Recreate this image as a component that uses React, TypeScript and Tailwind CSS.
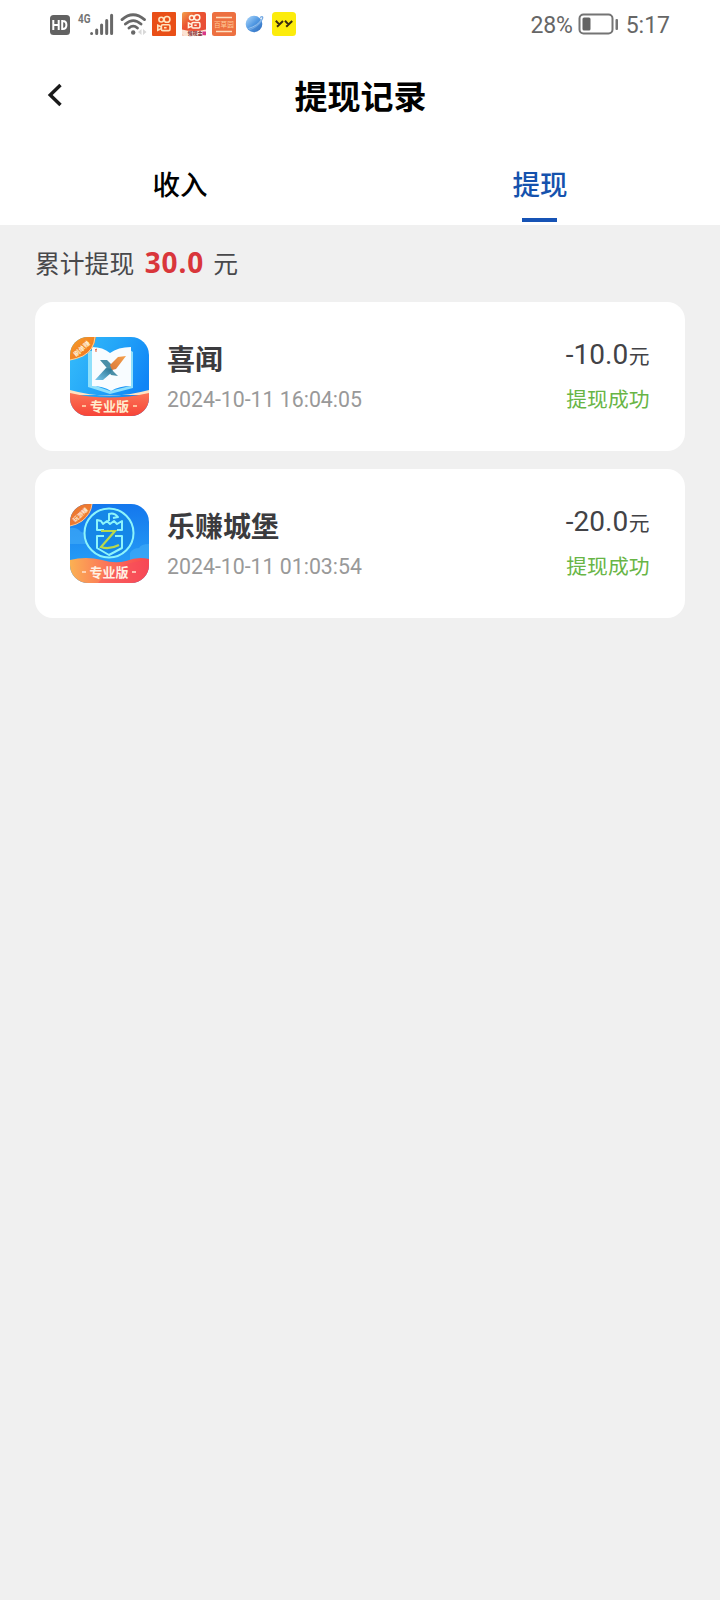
import type { ReactNode } from "react";

const CJK = "'Noto Sans CJK SC', sans-serif";

function CameraGlyph({ color }: { color: string }) {
  return (
    <g fill="none" stroke={color} strokeWidth="1.6">
      <circle cx="9.3" cy="7.6" r="2.4" />
      <circle cx="15" cy="7.4" r="2.9" />
      <rect x="9.4" y="12.8" width="8.6" height="5.8" rx="1.4" />
      <path d="M9.4 15 5.8 13.2v5L9.4 16.6" />
      <path d="M12 15.7h2.6" />
    </g>
  );
}

function StatusBar() {
  return (
    <div className="flex h-12 items-center justify-between pl-[50px] pr-[50px]">
      <div className="flex items-center">
        <svg width="20" height="20" viewBox="0 0 20 20" className="mt-[1px]">
          <rect width="20" height="20" rx="3.5" fill="#626262" />
          <path d="M3.3 5v10M8.7 5v10M3.3 10h5.4M12.2 5v10M11.3 6h1.5c4.8 0 4.8 8 0 8h-1.5" fill="none" stroke="#fff" strokeWidth="2" />
        </svg>
        <div className="ml-2 flex h-6 items-start">
          <svg width="13" height="16" viewBox="0 0 13 16" className="overflow-visible">
            <text x="0" y="11" fontFamily="Roboto, sans-serif" fontSize="13.5" fontWeight="700" fill="#747474" textLength="12.5" lengthAdjust="spacingAndGlyphs">4G</text>
          </svg>
          <svg width="25" height="24" viewBox="12 0 25 24" className="-ml-px -mr-px">
            <path d="M13.6 21.4v.2M18.7 18v3.6M23.6 13v8.6M28.7 8.6v13M33.6 3.2v18.4" stroke="#686868" strokeWidth="3" strokeLinecap="round" />
          </svg>
        </div>
        <svg width="27" height="24" viewBox="0 0 27 24" className="ml-[6px]">
          <g fill="none" stroke="#686868" strokeWidth="2.8" strokeLinecap="round">
            <path d="M2 7.6Q13 -2 24.5 7.6M5.4 12Q13.2 5.2 21 12M9 16Q13.2 12.3 17.4 16" />
          </g>
          <circle cx="13.2" cy="20.5" r="2.2" fill="#686868" />
          <path d="M21.5 17v6l-3.5-3zM23 17v6l3.500-3z" fill="#d8d8d8" />
        </svg>
        <svg width="24" height="24" viewBox="0 0 24 24" className="ml-[5px]">
          <rect width="24" height="24" rx="1" fill="#e94f17" />
          <CameraGlyph color="#ffe2bd" />
        </svg>
        <svg width="24" height="24" viewBox="0 0 24 24" className="ml-[6px] overflow-visible">
          <defs>
            <linearGradient id="quick" x1="0" y1="0" x2="1" y2="1">
              <stop offset="0" stopColor="#f2a14d" />
              <stop offset=".35" stopColor="#eb5430" />
              <stop offset="1" stopColor="#e64a3a" />
            </linearGradient>
          </defs>
          <rect width="24" height="24" rx="2" fill="url(#quick)" />
          <g transform="translate(1 -1.5) scale(.94)">
            <CameraGlyph color="#fff4e2" />
          </g>
          <path d="M0 17.5q12 3 24 0v4.500q0 2-2 2H2q-2 0-2-2z" fill="#fbe3d3" />
          <text x="5.5" y="23.2" fontFamily={CJK} fontSize="5" fontWeight="700" fill="#7b2330">领现金</text>
          <rect x="20.5" y="19.5" width="3.5" height="3.5" fill="#d9378a" />
        </svg>
        <svg width="24" height="24" viewBox="0 0 24 24" className="ml-[6px]">
          <rect width="24" height="24" rx="2.5" fill="#ed7040" />
          <path d="M4 5.5h16M4 19.5h16" stroke="#ffe0c0" strokeWidth="1.3" />
          <text x="2" y="14.8" fontFamily={CJK} fontSize="6.6" fill="#ffc997">百草园</text>
        </svg>
        <svg width="20" height="20" viewBox="0 0 20 20" className="ml-[8px]">
          <defs>
            <linearGradient id="planet" x1="0" y1="0" x2="1" y2="1">
              <stop offset="0" stopColor="#b4dcfc" />
              <stop offset=".5" stopColor="#4f97e2" />
              <stop offset="1" stopColor="#2d68b8" />
            </linearGradient>
          </defs>
          <circle cx="10" cy="10" r="8.3" fill="url(#planet)" />
          <path d="M16 3.5Q19.5 1.5 18.5 4.5 15.500 12 5 16" fill="none" stroke="#6fa6e2" strokeWidth="1.3" />
          <path d="M17.5 5.5Q14 11.500 4.500 14.500" fill="none" stroke="#b5d7f7" strokeWidth=".7" />
        </svg>
        <svg width="24" height="24" viewBox="0 0 24 24" className="ml-[8px]">
          <rect width="24" height="24" rx="3.5" fill="#fcec0c" />
          <path d="M3.8 8.8l3.4 3.6M11 9 5 14.800M13 8.800l3.400 3.600M20.200 9l-6 5.800" fill="none" stroke="#3a2d10" strokeWidth="2" />
        </svg>
      </div>
      <div className="flex items-center font-['Roboto',sans-serif] text-[23px] leading-none text-[#666]">
        <span className="mt-[3px] tracking-[-0.2px]">28%</span>
        <svg width="42" height="22" viewBox="0 0 42 22" className="ml-[5px] mr-[6px]">
          <rect x="1.5" y="1.5" width="33" height="19" rx="4" fill="none" stroke="#747474" strokeWidth="2" />
          <rect x="4.5" y="4.5" width="8" height="13" rx="1.5" fill="#646464" />
          <rect x="37.5" y="6" width="2.5" height="11" rx="1" fill="#747474" />
        </svg>
        <span className="mt-[3px]">5:17</span>
      </div>
    </div>
  );
}

function NewsIcon() {
  return (
    <svg width="79" height="79" viewBox="0 0 79 79">
      <defs>
        <clipPath id="newsClip"><rect width="79" height="79" rx="18" /></clipPath>
        <linearGradient id="newsBg" x1="0" y1="0" x2="1" y2=".5">
          <stop offset="0" stopColor="#36bdfb" />
          <stop offset=".5" stopColor="#24a6f8" />
          <stop offset="1" stopColor="#1085f6" />
        </linearGradient>
        <linearGradient id="newsFoot" x1="0" y1="0" x2="0" y2="1">
          <stop offset="0" stopColor="#fb7456" />
          <stop offset="1" stopColor="#f74438" />
        </linearGradient>
        <linearGradient id="newsCorner" x1="0" y1="0" x2="1" y2="1">
          <stop offset="0" stopColor="#f6a02b" />
          <stop offset="1" stopColor="#ef6a1d" />
        </linearGradient>
        <linearGradient id="orangeArm" x1="1" y1="0" x2="0" y2="1">
          <stop offset="0" stopColor="#f6a04b" />
          <stop offset="1" stopColor="#d9783a" />
        </linearGradient>
        <linearGradient id="tealArm" x1="1" y1="0" x2="0" y2="1">
          <stop offset="0" stopColor="#28718d" />
          <stop offset="1" stopColor="#79c9ef" />
        </linearGradient>
      </defs>
      <g clipPath="url(#newsClip)">
        <rect width="79" height="79" fill="url(#newsBg)" />
        <path d="M18 14h5v34l17 6 20-5V13l3 2v36l-23 6-22-7z" fill="#8fe0fb" />
        <path d="M22 10q11 0 18 6 8-6 21-6v39q-12 0-20 5-8-5-19-5z" fill="#f8fcff" />
        <path d="M26 15v-3M27 12l-2 1" stroke="#e5603b" strokeWidth="1" />
        <path d="M30 23h7l4 4 2 7 5 5-7-1-5-8z" fill="#4a8fa8" />
        <path d="M36 31l6 1-1 4-8 7h-8z" fill="url(#tealArm)" />
        <path d="M56 19l-8 1-8 8 2 5 4-1z" fill="url(#orangeArm)" />
        <path d="M0 53q39 11 79 0v5H0z" fill="#ffe3c3" />
        <path d="M0 56q39 9 79 0v23H0z" fill="url(#newsFoot)" />
        <path d="M0 0h26Q24 14 13 19 6 22 0 23z" fill="url(#newsCorner)" />
        <path d="M25 0Q24 13 13 19 6 22 0 23" fill="none" stroke="#ffd59b" strokeWidth="1" />
        <text x="12" y="14" textAnchor="middle" transform="rotate(-43 12 12)" fontFamily={CJK} fontSize="6.5" fontWeight="700" fill="#fff0d5">刷单赚</text>
        <path d="M12 69h4M63 69h4" stroke="#ffe3b8" strokeWidth="1.5" />
        <text x="39.5" y="74" textAnchor="middle" fontFamily={CJK} fontSize="13" fontWeight="700" fill="#ffedce">专业版</text>
      </g>
    </svg>
  );
}

function CastleIcon() {
  return (
    <svg width="79" height="79" viewBox="0 0 79 79">
      <defs>
        <clipPath id="castleClip"><rect width="79" height="79" rx="18" /></clipPath>
        <linearGradient id="castleBg" x1="0" y1="0" x2="0" y2="1">
          <stop offset="0" stopColor="#1477ed" />
          <stop offset=".7" stopColor="#249af5" />
        </linearGradient>
        <linearGradient id="castleFoot" x1="0" y1="0" x2="1" y2="0">
          <stop offset="0" stopColor="#fbb153" />
          <stop offset=".5" stopColor="#fb7059" />
          <stop offset="1" stopColor="#f8474e" />
        </linearGradient>
      </defs>
      <g clipPath="url(#castleClip)">
        <rect width="79" height="79" fill="url(#castleBg)" />
        <path d="M0 24q7-1 11 4 6 1 8 5 4 4 0 7H0zM60 49q3-5 9-5 2-4 10-4v18H60z" fill="#43adf7" opacity=".6" />
        <path d="M0 56q16-4 32 0 13 4 24 1 12-5 23-2v24H0z" fill="url(#castleFoot)" />
        <path d="M28 79q16-20 51-23v23z" fill="#f6465f" opacity=".45" />
        <circle cx="39" cy="29" r="24.5" fill="#1587e7" stroke="#8df4fb" strokeWidth="2" />
        <g fill="none" stroke="#8df4fb" strokeWidth="2" strokeLinejoin="round">
          <path d="M34 26h-7V16l4 1 2 3 4-3 3 3 4-3 3 3 5-3v9h-5M34 32h-7v12l12 7 13-7V32h-7M39 17v-7q5-2 9 3l-5 1" />
        </g>
        <path d="M31 27h14L31 43q8 3 18-2" fill="none" stroke="#bad94c" strokeWidth="2.2" />
        <path d="M0 0h22Q21 10 12 17 6 21 0 22z" fill="#ed7931" />
        <path d="M22 0Q21 10 12 17 6 21 0 22" fill="none" stroke="#ffc58d" strokeWidth="1" />
        <text x="10.5" y="13" textAnchor="middle" transform="rotate(-43 10.5 11)" fontFamily={CJK} fontSize="6" fontWeight="700" fill="#ffe8d3">玩游赚</text>
        <path d="M12 68h4M62 68h4" stroke="#ffe3cf" strokeWidth="1.5" />
        <text x="39" y="72.5" textAnchor="middle" fontFamily={CJK} fontSize="13" fontWeight="700" fill="#fff0e3">专业版</text>
      </g>
    </svg>
  );
}

type RecordProps = { icon: ReactNode; name: string; time: string; amount: string };

function RecordCard({ icon, name, time, amount }: RecordProps) {
  return (
    <li className="flex h-[149px] items-center rounded-[18px] bg-white pl-[35px] pr-[35.5px]">
      {icon}
      <div className="ml-[18px] flex flex-1 flex-col pt-[2px]">
        <h2 className="text-[28px] font-bold leading-[40px] text-[#3b3b3e]">{name}</h2>
        <time className="mt-[4px] font-['Roboto',sans-serif] text-[21.3px] leading-[36px] text-[#999]">{time}</time>
      </div>
      <div className="flex flex-col items-end pb-[2px]">
        <p className="flex items-baseline leading-[40px] text-[#424246]">
          <span className="font-['Roboto',sans-serif] text-[28px]">{amount}</span>
          <span className="ml-[0.5px] text-[20.8px]">元</span>
        </p>
        <p className="mt-[5px] text-[20.8px] leading-[36px] text-[#68b545]">提现成功</p>
      </div>
    </li>
  );
}

export default function App() {
  return (
    <div className="min-h-[1600px] w-[720px] bg-[#f0f0f0] font-['Noto_Sans_CJK_SC',sans-serif]">
      <header className="h-[225px] bg-white">
        <StatusBar />
        <div className="grid h-[97px] grid-cols-[100px_1fr_100px] items-center">
          <button aria-label="返回" className="pl-[47px]">
            <svg width="16" height="24" viewBox="0 0 16 24" className="mb-1">
              <path d="M13.5 2 3.2 12l10.3 10" fill="none" stroke="#1a1a1a" strokeWidth="3.4" />
            </svg>
          </button>
          <h1 className="pb-[3px] pl-px text-center text-[33px] font-bold leading-[48px] text-black">提现记录</h1>
        </div>
        <nav className="grid h-20 grid-cols-2 text-[27.5px] font-medium leading-[40px]">
          <button className="flex flex-col items-center pt-[18px] text-black">收入</button>
          <button className="flex flex-col items-center pt-[18px] text-[#1552ad]">
            提现
            <span className="mr-[1px] mt-[15px] h-1 w-[35px] bg-[#1653b5]" />
          </button>
        </nav>
      </header>
      <main className="px-[35px]">
        <p className="flex h-[77px] items-baseline pt-[17px] text-[24.8px] leading-[40px] text-[#48484b]">
          累计提现
          <strong className="ml-[10.5px] mr-[9px] font-['Noto_Sans',sans-serif] text-[28px] font-bold tracking-[0.9px] text-[#d9363b]">30.0</strong>
          元
        </p>
        <ul className="flex flex-col gap-[18px]">
          <RecordCard icon={<NewsIcon />} name="喜闻" time="2024-10-11 16:04:05" amount="-10.0" />
          <RecordCard icon={<CastleIcon />} name="乐赚城堡" time="2024-10-11 01:03:54" amount="-20.0" />
        </ul>
      </main>
    </div>
  );
}
